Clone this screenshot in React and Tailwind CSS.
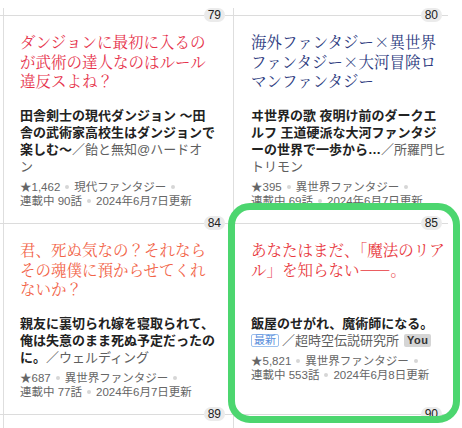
import React from "react";

const Dot = () => (
  <span className="inline-block w-[4px] h-[4px] rounded-full bg-[#d6d6d6] mx-[5px] align-middle relative -top-[1px]" />
);

const Badge = ({ n }) => (
  <span className="shrink-0 rounded-full bg-[#ebebeb] px-[4px] text-[12px] leading-[14px] text-[#222] font-['Liberation_Sans',sans-serif]">
    {n}
  </span>
);

const DividerLeft = ({ n }) => (
  <div className="-ml-[4px] flex items-center h-[14px]">
    <div className="flex-1 h-px bg-[#dcdcdc]" />
    <Badge n={n} />
    <div className="w-[8px] h-px bg-[#dcdcdc]" />
  </div>
);

const DividerRight = ({ n }) => (
  <div className="mr-[14px] flex items-center h-[14px]">
    <div className="flex-1 h-px bg-[#dcdcdc]" />
    <Badge n={n} />
    <div className="w-[6px] h-px bg-[#dcdcdc]" />
  </div>
);

const Author = ({ children }) => (
  <span className="font-normal text-[#5f5f5f]">{children}</span>
);

const Body = ({ title, color, book, meta1, meta2 }) => (
  <div className="pt-[10px] pb-[8px]">
    <div
      className={`min-h-[58.5px] text-[15.5px] leading-[19.5px] font-['Noto_Serif_CJK_JP','Noto_Sans_CJK_JP',serif] ${color}`}
    >
      {title}
    </div>
    <div className="mt-[16.5px] text-[13px] leading-[17px] font-bold text-[#222] font-['Liberation_Sans','Noto_Sans_CJK_JP',sans-serif]">
      {book}
    </div>
    <div className="mt-[5px] text-[11.5px] leading-[14px] text-[#666] font-['Liberation_Sans','Noto_Sans_CJK_JP',sans-serif]">
      <div>{meta1}</div>
      <div>{meta2}</div>
    </div>
  </div>
);

export default function App() {
  return (
    <div className="relative h-[428px] w-[462px] overflow-hidden bg-white pl-[3px] pt-[8px]">
      <div className="grid grid-cols-[230px_229px]">
        {/* Row 1 left */}
        <div className="border-l border-[#dedede]">
          <DividerLeft n="79" />
          <div className="pl-4 pr-[10px]">
            <Body
              color="text-[#e6324b]"
              title={
                <>
                  ダンジョンに最初に入るの
                  <br />
                  が武術の達人なのはルール
                  <br />
                  違反スよね？
                </>
              }
              book={
                <>
                  田舎剣士の現代ダンジョン 〜田
                  <br />
                  舎の武術家高校生はダンジョンで
                  <br />
                  楽しむ〜
                  <Author>
                    ／飴と無知@ハードオ
                    <br />ン
                  </Author>
                </>
              }
              meta1={
                <>
                  ★1,462
                  <Dot />
                  現代ファンタジー
                  <Dot />
                </>
              }
              meta2={
                <>
                  連載中 90話
                  <Dot />
                  2024年6月7日更新
                </>
              }
            />
          </div>
        </div>

        {/* Row 1 right */}
        <div className="border-l border-[#dedede]">
          <DividerRight n="80" />
          <div className="pl-[17px] pr-[8px]">
            <Body
              color="text-[#2c3a7e]"
              title={
                <>
                  海外ファンタジー×異世界
                  <br />
                  ファンタジー×大河冒険ロ
                  <br />
                  マンファンタジー
                </>
              }
              book={
                <>
                  ヰ世界の歌 夜明け前のダークエ
                  <br />
                  ルフ 王道硬派な大河ファンタジ
                  <br />
                  ーの世界で一歩から…
                  <Author>
                    ／所羅門ヒ
                    <br />
                    トリモン
                  </Author>
                </>
              }
              meta1={
                <>
                  ★395
                  <Dot />
                  異世界ファンタジー
                  <Dot />
                </>
              }
              meta2={
                <>
                  連載中 69話
                  <Dot />
                  2024年6月7日更新
                </>
              }
            />
          </div>
        </div>

        {/* Row 2 left */}
        <div className="border-l border-[#dedede]">
          <DividerLeft n="84" />
          <div className="pl-4 pr-[10px]">
            <Body
              color="text-[#f26448]"
              title={
                <>
                  君、死ぬ気なの？それなら
                  <br />
                  その魂僕に預からせてくれ
                  <br />
                  ないか？
                </>
              }
              book={
                <>
                  親友に裏切られ嫁を寝取られて、
                  <br />
                  俺は失意のまま死ぬ予定だったの
                  <br />
                  に。
                  <Author>／ウェルディング</Author>
                </>
              }
              meta1={
                <>
                  ★687
                  <Dot />
                  異世界ファンタジー
                  <Dot />
                </>
              }
              meta2={
                <>
                  連載中 77話
                  <Dot />
                  2024年6月7日更新
                </>
              }
            />
          </div>
        </div>

        {/* Row 2 right (highlighted) */}
        <div className="relative border-l border-[#dedede]">
          <DividerRight n="85" />
          <div className="pl-[17px] pr-[8px]">
            <Body
              color="text-[#e8383d]"
              title={
                <>
                  あなたはまだ、「魔法のリア
                  <br />
                  ル」を知らない――。
                </>
              }
              book={
                <>
                  飯屋のせがれ、魔術師になる。
                  <br />
                  <span className="inline-block align-middle relative -top-[1px] mr-[3px] border border-[#9cc0ee] rounded-[2px] px-[2px] text-[11px] leading-[11px] font-normal text-[#5b8fdc]">
                    最新
                  </span>
                  <Author>／超時空伝説研究所</Author>
                  <span className="inline-block align-middle relative -top-[1px] ml-[5px] rounded-[2px] bg-[#d5d5d5] px-[3px] text-[11px] leading-[13px] font-bold tracking-[0.5px] text-[#333]">
                    You
                  </span>
                </>
              }
              meta1={
                <>
                  ★5,821
                  <Dot />
                  異世界ファンタジー
                  <Dot />
                </>
              }
              meta2={
                <>
                  連載中 553話
                  <Dot />
                  2024年6月8日更新
                </>
              }
            />
          </div>
          <div className="pointer-events-none absolute -left-[6px] right-[2px] -top-[13px] -bottom-[16px] z-10 rounded-[22px] border-[7px] border-[#4cd66f]" />
        </div>

        {/* Row 3 */}
        <div className="border-l border-[#dedede]">
          <DividerLeft n="89" />
          <div className="h-[40px]" />
        </div>
        <div className="border-l border-[#dedede]">
          <DividerRight n="90" />
          <div className="h-[40px]" />
        </div>
      </div>
    </div>
  );
}
